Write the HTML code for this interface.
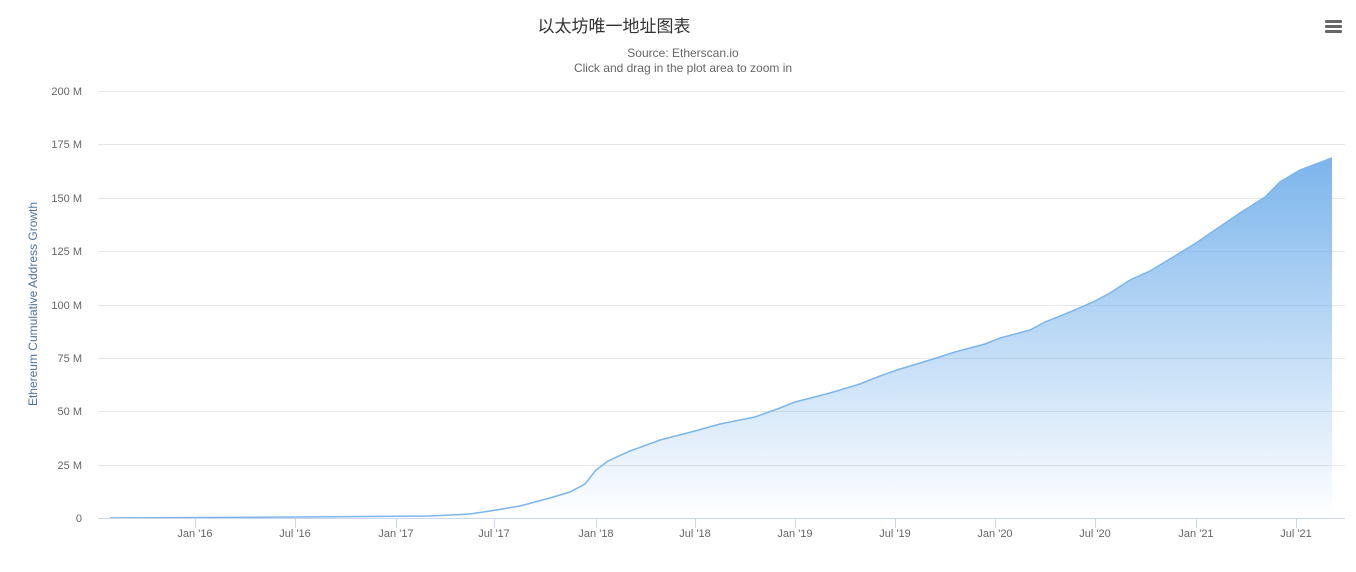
<!DOCTYPE html>
<html><head><meta charset="utf-8"><style>
html,body{margin:0;padding:0;background:#fff;width:1356px;height:572px;overflow:hidden}
svg{display:block;font-family:"Liberation Sans","DejaVu Sans","Noto Sans CJK SC",sans-serif}
</style></head><body>
<svg width="1356" height="572" viewBox="0 0 1356 572">
<defs><linearGradient id="g" x1="0" y1="0" x2="0" y2="1">
<stop offset="0" stop-color="#7cb5ec" stop-opacity="1"/>
<stop offset="1" stop-color="#7cb5ec" stop-opacity="0"/></linearGradient></defs>
<text x="614" y="32" text-anchor="middle" font-size="17" fill="#333" font-family="'Liberation Sans','Noto Sans CJK SC',sans-serif">以太坊唯一地址图表</text>
<text x="683" y="57" text-anchor="middle" font-size="12" fill="#666">Source: Etherscan.io</text>
<text x="683" y="72" text-anchor="middle" font-size="12" fill="#666">Click and drag in the plot area to zoom in</text>
<g fill="#666"><rect x="1325" y="20" width="17" height="3" rx="1"/><rect x="1325" y="25" width="17" height="3" rx="1"/><rect x="1325" y="30" width="17" height="3" rx="1"/></g>
<g stroke="#e6e6e6" stroke-width="1">
<line x1="98" x2="1345" y1="91.5" y2="91.5"/><line x1="98" x2="1345" y1="144.5" y2="144.5"/>
<line x1="98" x2="1345" y1="198.5" y2="198.5"/><line x1="98" x2="1345" y1="251.5" y2="251.5"/>
<line x1="98" x2="1345" y1="305.5" y2="305.5"/><line x1="98" x2="1345" y1="358.5" y2="358.5"/>
<line x1="98" x2="1345" y1="411.5" y2="411.5"/><line x1="98" x2="1345" y1="465.5" y2="465.5"/>
</g>
<g font-size="11" fill="#666" text-anchor="end">
<text x="82" y="95">200 M</text><text x="82" y="148">175 M</text><text x="82" y="202">150 M</text>
<text x="82" y="255">125 M</text><text x="82" y="309">100 M</text><text x="82" y="362">75 M</text>
<text x="82" y="415">50 M</text><text x="82" y="469">25 M</text><text x="82" y="522">0</text>
</g>
<text transform="translate(37,304) rotate(-90)" text-anchor="middle" font-size="12" fill="#4d759e">Ethereum Cumulative Address Growth</text>
<path d="M110,518 L300,517 L430,516 L470,514 L490,511 L520,506 L550,498 L570,492 L585,484 L596,470 L608,461 L630,451 L660,440 L695,431 L720,424 L755,417 L780,408 L795,402 L830,393 L860,384 L880,376 L900,369 L930,360 L955,352 L985,344 L1000,338 L1030,330 L1045,322 L1070,312 L1095,301 L1110,293 L1130,280 L1150,271 L1170,259 L1196,243 L1215,230 L1240,213 L1265,197 L1280,182 L1300,170 L1332,158 L1332,518 L110,518 Z" fill="url(#g)"/>
<path d="M110,518 L300,517 L430,516 L470,514 L490,511 L520,506 L550,498 L570,492 L585,484 L596,470 L608,461 L630,451 L660,440 L695,431 L720,424 L755,417 L780,408 L795,402 L830,393 L860,384 L880,376 L900,369 L930,360 L955,352 L985,344 L1000,338 L1030,330 L1045,322 L1070,312 L1095,301 L1110,293 L1130,280 L1150,271 L1170,259 L1196,243 L1215,230 L1240,213 L1265,197 L1280,182 L1300,170 L1332,158" fill="none" stroke="#7cb5ec" stroke-width="1.5"/>
<line x1="98" x2="1345" y1="518.5" y2="518.5" stroke="#ccd6eb"/>
<g stroke="#ccd6eb">
<line x1="195.5" x2="195.5" y1="518" y2="528"/><line x1="295.5" x2="295.5" y1="518" y2="528"/>
<line x1="396.5" x2="396.5" y1="518" y2="528"/><line x1="494.5" x2="494.5" y1="518" y2="528"/>
<line x1="596.5" x2="596.5" y1="518" y2="528"/><line x1="695.5" x2="695.5" y1="518" y2="528"/>
<line x1="795.5" x2="795.5" y1="518" y2="528"/><line x1="895.5" x2="895.5" y1="518" y2="528"/>
<line x1="995.5" x2="995.5" y1="518" y2="528"/><line x1="1095.5" x2="1095.5" y1="518" y2="528"/>
<line x1="1196.5" x2="1196.5" y1="518" y2="528"/><line x1="1296.5" x2="1296.5" y1="518" y2="528"/>
</g>
<g font-size="11" fill="#666" text-anchor="middle">
<text x="195" y="537">Jan '16</text><text x="295" y="537">Jul '16</text><text x="396" y="537">Jan '17</text>
<text x="494" y="537">Jul '17</text><text x="596" y="537">Jan '18</text><text x="695" y="537">Jul '18</text>
<text x="795" y="537">Jan '19</text><text x="895" y="537">Jul '19</text><text x="995" y="537">Jan '20</text>
<text x="1095" y="537">Jul '20</text><text x="1196" y="537">Jan '21</text><text x="1296" y="537">Jul '21</text>
</g>
</svg>
</body></html>
